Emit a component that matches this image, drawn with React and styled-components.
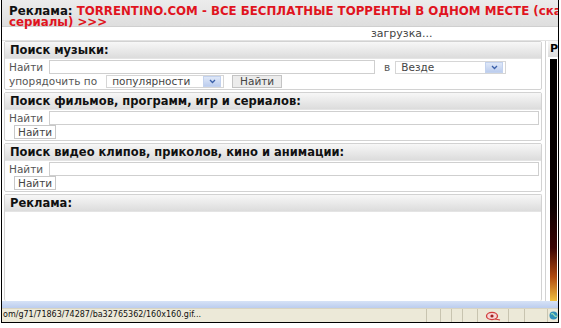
import React from 'react'
import styled, { createGlobalStyle } from 'styled-components'

const Global = createGlobalStyle`
  html, body { margin: 0; padding: 0; background: #fff; }
  body { font-family: "DejaVu Sans", Verdana, sans-serif; }
`

function Select({ value, width }) {
  return (
    <SelectBox $w={width}>
      <span>{value}</span>
      <Drop>
        <svg width="7" height="5" viewBox="0 0 7 5">
          <path d="M1 1 L3.5 3.5 L6 1" stroke="#3a5fa8" strokeWidth="1.3" fill="none" />
        </svg>
      </Drop>
    </SelectBox>
  )
}

function SimpleSearch({ title }) {
  return (
    <Section>
      <Head>{title}</Head>
      <Body>
        <Row>
          <Label>Найти</Label>
          <Input $w={488} />
        </Row>
        <SmallButton>Найти</SmallButton>
      </Body>
    </Section>
  )
}

export default function App() {
  return (
    <>
      <Global />
      <Frame>
        <AdBar>
          <AdLine>
            Реклама: <Red>TORRENTINO.COM - ВСЕ БЕСПЛАТНЫЕ ТОРРЕНТЫ В ОДНОМ МЕСТЕ (скачать фильмы, игры, программы,</Red>
          </AdLine>
          <AdLine><Red>сериалы) &gt;&gt;&gt;</Red></AdLine>
        </AdBar>
        <Loading>загрузка...</Loading>
        <Main>
          <Left>
            <Section>
              <Head>Поиск музыки:</Head>
              <Body>
                <Row>
                  <Label>Найти</Label>
                  <Input $w={324} />
                  <Label $ml={9} $mr={5}>в</Label>
                  <Select value="Везде" width={111} />
                </Row>
                <Row>
                  <Label $mr={9}>упорядочить по</Label>
                  <Select value="популярности" width={118} />
                  <GrayButton>Найти</GrayButton>
                </Row>
              </Body>
            </Section>
            <SimpleSearch title="Поиск фильмов, программ, игр и сериалов:" />
            <SimpleSearch title="Поиск видео клипов, приколов, кино и анимации:" />
            <Section $grow>
              <Head>Реклама:</Head>
            </Section>
          </Left>
          <Right>
            <RightHead>Р</RightHead>
            <Strip />
          </Right>
        </Main>
        <HScroll />
        <Status>
          <StatusText>om/g71/71863/74287/ba32765362/160x160.gif...</StatusText>
          <Cell $w={13} />
          <Cell $w={10} />
          <Cell $w={10} />
          <Cell $w={14} />
          <Cell $w={30}>
            <svg width="16" height="10" viewBox="0 0 16 10">
              <ellipse cx="7" cy="5" rx="5.5" ry="3.6" fill="#f6d6d6" stroke="#d23c3c" strokeWidth="1.3" />
              <circle cx="7" cy="5" r="1.6" fill="#a02020" />
              <path d="M10 8 L15 9" stroke="#d23c3c" strokeWidth="1.2" />
            </svg>
          </Cell>
          <Cell $w={15} />
          <Cell $w={22} />
          <Cell $w={10}>
            <svg width="9" height="9" viewBox="0 0 9 9">
              <circle cx="4.5" cy="4.5" r="4" fill="#2f8fb8" />
              <path d="M2 3 Q4 2 5 4 Q6 6 8 5" stroke="#9fe0b0" strokeWidth="1.2" fill="none" />
            </svg>
          </Cell>
        </Status>
      </Frame>
    </>
  )
}

const Frame = styled.div`
  width: 556px;
  height: 322px;
  border: 1px solid #000;
  border-top: none;
  margin-left: 1px;
  display: flex;
  flex-direction: column;
  overflow: hidden;
  background: #fff;
`

const AdBar = styled.div`
  height: 27px;
  box-sizing: border-box;
  padding: 6px 0 0 7px;
  background: linear-gradient(#ececec, #dedede);
  font-weight: bold;
  font-size: 11.8px;
  color: #111;
  border-bottom: 1px solid #cfcfcf;
`

const AdLine = styled.div`
  white-space: nowrap;
  height: 11px;
  line-height: 11px;
`

const Red = styled.span`
  color: #e0141e;
`

const Loading = styled.div`
  height: 13px;
  padding-left: 369px;
  font-size: 11px;
  line-height: 13px;
  color: #444;
  border-bottom: 1px solid #e2e2e2;
`

const Main = styled.div`
  flex: 1;
  display: flex;
  gap: 3px;
  padding: 0 0 0 2px;
  min-height: 0;
`

const Left = styled.div`
  width: 538px;
  display: flex;
  flex-direction: column;
  gap: 2px;
`

const Section = styled.div`
  border: 1px solid #d2d2d2;
  border-radius: 2px;
  ${p => p.$grow && 'flex: 1; border-bottom: none;'}
`

const Head = styled.div`
  height: 16px;
  padding-left: 5px;
  background: linear-gradient(#f7f7f7, #dcdcdc);
  font-size: 11.5px;
  font-weight: bold;
  line-height: 16px;
  color: #111;
  border-bottom: 1px solid #e4e4e4;
  white-space: nowrap;
`

const Body = styled.div`
  padding: 1px 0 1px 4px;
  display: flex;
  flex-direction: column;
`

const Row = styled.div`
  display: flex;
  align-items: center;
  height: 14px;
`

const Label = styled.span`
  font-size: 10.5px;
  color: #555;
  margin-left: ${p => p.$ml || 0}px;
  margin-right: ${p => p.$mr || 6}px;
  white-space: nowrap;
`

const Input = styled.div`
  width: ${p => p.$w}px;
  height: 12px;
  border: 1px solid #cfcfcf;
  background: #fff;
`

const SelectBox = styled.div`
  width: ${p => p.$w}px;
  height: 13px;
  box-sizing: border-box;
  border: 1px solid #d6d6d6;
  display: flex;
  align-items: center;
  justify-content: space-between;
  padding-left: 5px;
  font-size: 10.5px;
  color: #444;
`

const Drop = styled.div`
  width: 16px;
  height: 9px;
  margin-right: 2px;
  background: linear-gradient(#dfe8f8, #bccdee);
  border: 1px solid #c3d2ee;
  display: flex;
  align-items: center;
  justify-content: center;
`

const GrayButton = styled.div`
  margin-left: 8px;
  width: 50px;
  box-sizing: border-box;
  height: 13px;
  text-align: center;
  border: 1px solid #c4c4c4;
  background: #ececec;
  font-size: 10.5px;
  line-height: 11px;
  color: #444;
`

const SmallButton = styled.div`
  align-self: flex-start;
  margin-left: 5px;
  height: 12px;
  padding: 0 3px;
  border: 1px solid #c8c8c8;
  background: #fff;
  font-size: 10.5px;
  line-height: 12px;
  color: #444;
`

const Right = styled.div`
  width: 12px;
  display: flex;
  flex-direction: column;
  border-left: 1px solid #d2d2d2;
`

const RightHead = styled.div`
  height: 16px;
  margin-left: 2px;
  background: linear-gradient(#f7f7f7, #dcdcdc);
  font-size: 11px;
  font-weight: bold;
  line-height: 16px;
  padding-left: 2px;
  overflow: hidden;
`

const Strip = styled.div`
  flex: 1;
  margin: 2px 1px 0 4px;
  background: linear-gradient(#000 0%, #0a0000 60%, #3a0404 78%, #b04a10 90%, #f0c040 100%);
`

const HScroll = styled.div`
  height: 7px;
  background: linear-gradient(#d6e2f6, #bccdee);
`

const Status = styled.div`
  height: 13px;
  display: flex;
  background: #ece9d8;
  border-top: 1px solid #d8d4c2;
  font-size: 8px;
  line-height: 12px;
  color: #111;
`

const StatusText = styled.div`
  flex: 1;
  padding-left: 1px;
  white-space: nowrap;
  overflow: hidden;
`

const Cell = styled.div`
  width: ${p => p.$w}px;
  border-left: 1px solid #c8c4b0;
  display: flex;
  align-items: center;
  justify-content: center;
`
